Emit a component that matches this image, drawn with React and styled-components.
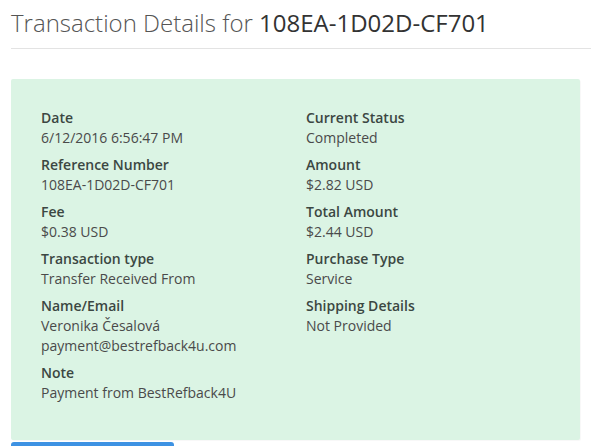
import React from "react";
import styled, { createGlobalStyle } from "styled-components";

const Global = createGlobalStyle`
  html, body { margin: 0; padding: 0; background: #fff; }
  body { font-family: "Open Sans", "Liberation Sans", sans-serif; overflow: hidden; }
`;

const Page = styled.div`
  padding: 0 0 0 11px;
  width: 580px;
`;

const Header = styled.h1`
  margin: 0;
  padding: 6px 0 0 0;
  height: 49px;
  box-sizing: border-box;
  font-size: 24px;
  line-height: 33px;
  font-weight: 300;
  color: #555;
  border-bottom: 1px solid #e3e3e3;
  white-space: nowrap;
`;

const Id = styled.span`
  font-weight: 400;
  color: #333;
`;

const Panel = styled.div`
  margin-top: 30px;
  width: 569px;
  box-sizing: border-box;
  background: #dbf4e4;
  border-radius: 2px;
  padding: 29px 30px 30px;
  display: grid;
  grid-template-columns: 265px 1fr;
  box-shadow: 1px 1px 1px rgba(0,0,0,0.03);
`;

const Column = styled.div`
  display: flex;
  flex-direction: column;
`;

const Field = styled.div`
  margin-bottom: 7px;
  font-size: 14px;
  line-height: 20px;
`;

const Label = styled.div`
  font-weight: 600;
  color: #3b4742;
`;

const Value = styled.div`
  color: #4a4a4a;
`;

const Button = styled.div`
  margin-top: 2px;
  width: 163px;
  height: 20px;
  background: #3d92e3;
  border-radius: 3px 3px 0 0;
`;

const left = [
  ["Date", ["6/12/2016 6:56:47 PM"]],
  ["Reference Number", ["108EA-1D02D-CF701"]],
  ["Fee", ["$0.38 USD"]],
  ["Transaction type", ["Transfer Received From"]],
  ["Name/Email", ["Veronika Česalová", "payment@bestrefback4u.com"]],
  ["Note", ["Payment from BestRefback4U"]],
];

const right = [
  ["Current Status", ["Completed"]],
  ["Amount", ["$2.82 USD"]],
  ["Total Amount", ["$2.44 USD"]],
  ["Purchase Type", ["Service"]],
  ["Shipping Details", ["Not Provided"]],
];

const renderCol = (items) => (
  <Column>
    {items.map(([l, vals]) => (
      <Field key={l}>
        <Label>{l}</Label>
        {vals.map((v) => (
          <Value key={v}>{v}</Value>
        ))}
      </Field>
    ))}
  </Column>
);

export default function App() {
  return (
    <>
      <Global />
      <Page>
        <Header>
          Transaction Details for <Id>108EA-1D02D-CF701</Id>
        </Header>
        <Panel>
          {renderCol(left)}
          {renderCol(right)}
        </Panel>
        <Button />
      </Page>
    </>
  );
}
